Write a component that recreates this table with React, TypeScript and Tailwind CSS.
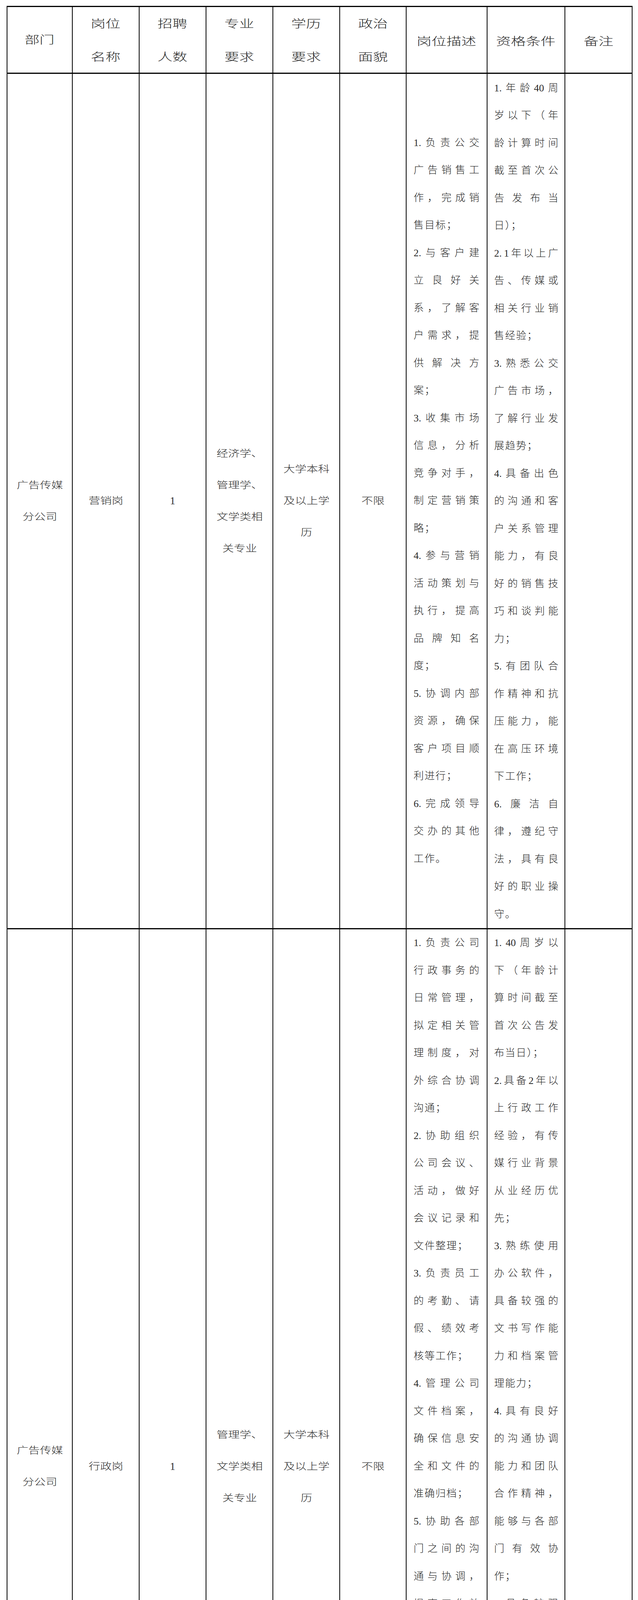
import React from "react";

const FONT = "font-['Liberation_Serif','Noto_Sans_CJK_SC',serif] font-light text-[#2a2a2a]";

const r1desc: string[][] = [
  ["1.负责公交", "广告销售工", "作，完成销", "售目标；"],
  ["2.与客户建", "立良好关", "系，了解客", "户需求，提", "供解决方", "案；"],
  ["3.收集市场", "信息，分析", "竞争对手，", "制定营销策", "略；"],
  ["4.参与营销", "活动策划与", "执行，提高", "品牌知名", "度；"],
  ["5.协调内部", "资源，确保", "客户项目顺", "利进行；"],
  ["6.完成领导", "交办的其他", "工作。"],
];

const r1req: string[][] = [
  ["1.年龄40周", "岁以下（年", "龄计算时间", "截至首次公", "告发布当", "日）；"],
  ["2.1年以上广", "告、传媒或", "相关行业销", "售经验；"],
  ["3.熟悉公交", "广告市场，", "了解行业发", "展趋势；"],
  ["4.具备出色", "的沟通和客", "户关系管理", "能力，有良", "好的销售技", "巧和谈判能", "力；"],
  ["5.有团队合", "作精神和抗", "压能力，能", "在高压环境", "下工作；"],
  ["6.廉洁自", "律，遵纪守", "法，具有良", "好的职业操", "守。"],
];

const r2desc: string[][] = [
  ["1.负责公司", "行政事务的", "日常管理，", "拟定相关管", "理制度，对", "外综合协调", "沟通；"],
  ["2.协助组织", "公司会议、", "活动，做好", "会议记录和", "文件整理；"],
  ["3.负责员工", "的考勤、请", "假、绩效考", "核等工作；"],
  ["4.管理公司", "文件档案，", "确保信息安", "全和文件的", "准确归档；"],
  ["5.协助各部", "门之间的沟", "通与协调，", "提高工作效", "率；"],
  ["6.完成领导", "交办的其他", "工作。"],
];

const r2req: string[][] = [
  ["1.40周岁以", "下（年龄计", "算时间截至", "首次公告发", "布当日）；"],
  ["2.具备2年以", "上行政工作", "经验，有传", "媒行业背景", "从业经历优", "先；"],
  ["3.熟练使用", "办公软件，", "具备较强的", "文书写作能", "力和档案管", "理能力；"],
  ["4.具有良好", "的沟通协调", "能力和团队", "合作精神，", "能够与各部", "门有效协", "作；"],
  ["5.具备较强", "的责任心和", "执行力，工", "作认真细", "致，注重细", "节，善于处", "理流程性事", "务；"],
  ["6.具有良好", "的服务意识", "和保密意", "识，能够为", "公司员工提", "供优质的行", "政保障。"],
];

function tokenize(s: string): string[] {
  return s.match(/\d+\.|\d+|./g) || [];
}

function Paragraphs({ paras }: { paras: string[][] }) {
  return (
    <div className={`w-full text-[26px] leading-[70.5px] ${FONT}`}>
      {paras.map((p, pi) => (
        <div key={pi}>
          {p.map((line, li) =>
            li === p.length - 1 ? (
              <div key={li} className="h-[70.5px] whitespace-nowrap tracking-[2px]">
                {line}
              </div>
            ) : (
              <div key={li} className="flex h-[70.5px] justify-between whitespace-nowrap">
                {tokenize(line).map((t, ti) => (
                  <span key={ti}>{t}</span>
                ))}
              </div>
            )
          )}
        </div>
      ))}
    </div>
  );
}

function Stretched({ lines, header }: { lines: string[]; header?: boolean }) {
  return (
    <div
      className={
        header
          ? `text-center whitespace-nowrap text-[28px] leading-[85px] scale-x-[1.36] ${FONT}`
          : `text-center whitespace-nowrap text-[24px] leading-[81px] scale-x-[1.23] ${FONT}`
      }
    >
      {lines.map((l, i) => (
        <div key={i}>{l}</div>
      ))}
    </div>
  );
}

function One() {
  return (
    <div className={`text-center text-[27px] leading-[81px] ${FONT}`}>1</div>
  );
}

const cell = "border-r-2 border-b-[3px] border-black flex justify-center min-w-0 overflow-hidden";

export default function App() {
  return (
    <div className="h-[5143px] w-[1632px] overflow-hidden bg-white pt-[15px] pl-[17px]">
      <div className="grid w-[1601px] grid-cols-[167px_171px_171px_171px_171px_170px_207px_199px_172px] grid-rows-[171px_2190px_2753px] border-t-[3px] border-l-2 border-black">
        {/* Header */}
        <div className={`${cell} items-center`}>
          <Stretched header lines={["部门"]} />
        </div>
        <div className={`${cell} items-center pt-[4px]`}>
          <Stretched header lines={["岗位", "名称"]} />
        </div>
        <div className={`${cell} items-center pt-[4px]`}>
          <Stretched header lines={["招聘", "人数"]} />
        </div>
        <div className={`${cell} items-center pt-[4px]`}>
          <Stretched header lines={["专业", "要求"]} />
        </div>
        <div className={`${cell} items-center pt-[4px]`}>
          <Stretched header lines={["学历", "要求"]} />
        </div>
        <div className={`${cell} items-center pt-[4px]`}>
          <Stretched header lines={["政治", "面貌"]} />
        </div>
        <div className={`${cell} items-center pt-[8px]`}>
          <Stretched header lines={["岗位描述"]} />
        </div>
        <div className={`${cell} items-center pt-[8px]`}>
          <Stretched header lines={["资格条件"]} />
        </div>
        <div className={`${cell} items-center pt-[8px]`}>
          <Stretched header lines={["备注"]} />
        </div>

        {/* Row 1 */}
        <div className={`${cell} items-center`}>
          <Stretched lines={["广告传媒", "分公司"]} />
        </div>
        <div className={`${cell} items-center`}>
          <Stretched lines={["营销岗"]} />
        </div>
        <div className={`${cell} items-center`}>
          <One />
        </div>
        <div className={`${cell} items-center`}>
          <Stretched lines={["经济学、", "管理学、", "文学类相", "关专业"]} />
        </div>
        <div className={`${cell} items-center`}>
          <Stretched lines={["大学本科", "及以上学", "历"]} />
        </div>
        <div className={`${cell} items-center`}>
          <Stretched lines={["不限"]} />
        </div>
        <div className={`${cell} items-center pl-[18px] pr-[19px]`}>
          <Paragraphs paras={r1desc} />
        </div>
        <div className={`${cell} items-center pl-[17px] pr-[16px] pt-[2px]`}>
          <Paragraphs paras={r1req} />
        </div>
        <div className={cell} />

        {/* Row 2 */}
        <div className={`${cell} items-center`}>
          <Stretched lines={["广告传媒", "分公司"]} />
        </div>
        <div className={`${cell} items-center`}>
          <Stretched lines={["行政岗"]} />
        </div>
        <div className={`${cell} items-center`}>
          <One />
        </div>
        <div className={`${cell} items-center`}>
          <Stretched lines={["管理学、", "文学类相", "关专业"]} />
        </div>
        <div className={`${cell} items-center`}>
          <Stretched lines={["大学本科", "及以上学", "历"]} />
        </div>
        <div className={`${cell} items-center`}>
          <Stretched lines={["不限"]} />
        </div>
        <div className={`${cell} items-start pl-[18px] pr-[19px]`}>
          <Paragraphs paras={r2desc} />
        </div>
        <div className={`${cell} items-center pl-[17px] pr-[16px]`}>
          <Paragraphs paras={r2req} />
        </div>
        <div className={cell} />
      </div>
    </div>
  );
}
